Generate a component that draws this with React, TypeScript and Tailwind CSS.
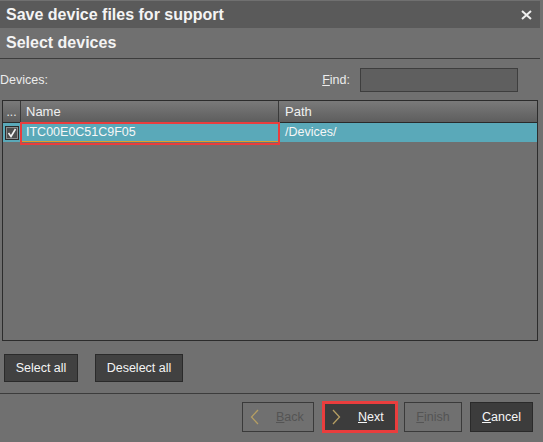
import React from "react";

const Chevron = ({ dir }: { dir: "left" | "right" }) => (
  <svg width="9" height="16" viewBox="0 0 9 16" className="shrink-0">
    <path
      d={dir === "left" ? "M8 1 L1.5 8 L8 15" : "M1 1 L7.5 8 L1 15"}
      fill="none"
      stroke="#b59e63"
      strokeWidth="1.3"
    />
  </svg>
);

export default function App() {
  return (
    <div
      className="w-[543px] h-[442px] bg-[#707070] flex flex-col overflow-hidden relative"
      style={{ fontFamily: '"Liberation Sans", Arial, sans-serif' }}
    >
      {/* Title bar */}
      <div className="pt-[1px] pr-[3px]">
        <div className="h-[27px] bg-[#5a5a5a] flex items-center justify-between pl-[6px] pr-[8px]">
          <span className="text-[16px] font-bold text-[#f4f4f4] leading-none">
            Save device files for support
          </span>
          <svg width="11" height="10" viewBox="0 0 11 10">
            <path d="M1 1 L10 9 M10 1 L1 9" stroke="#f0f0f0" strokeWidth="2" />
          </svg>
        </div>
      </div>
      {/* Sub header */}
      <div className="h-[30px] flex items-center pl-[6px]">
        <span className="text-[16px] font-bold text-[#f4f4f4] leading-none">Select devices</span>
      </div>
      <div className="h-px bg-[#3c3c3c] mr-[3px]" />

      {/* Devices / Find row */}
      <div className="mt-[9px] h-[24px] flex items-center">
        <span className="text-[12.5px] text-[#ececec] ml-0">Devices:</span>
        <span className="ml-auto text-[12.5px] text-[#ececec]">
          <span className="underline">F</span>ind:
        </span>
        <div className="ml-[10px] mr-[25px] w-[158px] h-[24px] bg-[#5f5f5f] border border-[#3e3e3e]" />
      </div>

      {/* Table */}
      <div className="mt-[8px] ml-[2px] w-[536px] h-[241px] border border-[#2c2c2c] relative">
        <div className="h-[22px] flex border-b border-[#2a2a2a] bg-linear-to-b from-[#7a7a7a] to-[#5e5e5e]">
          <div className="w-[18px] border-r border-[#3a3a3a] flex items-center justify-center text-[12px] text-[#e8e8e8]">
            ...
          </div>
          <div className="w-[258px] border-r border-[#3a3a3a] flex items-center pl-[5px] text-[13px] text-[#f0f0f0]">
            Name
          </div>
          <div className="flex-1 flex items-center pl-[6px] text-[13px] text-[#f0f0f0]">Path</div>
        </div>
        <div className="h-[19px] flex bg-[#5aa9b9]">
          <div className="w-[18px] flex items-center pl-[2px]">
            <div className="w-[14px] h-[14px] border border-[#2a2a2a] bg-[#4e4e4e] shadow-[inset_0_0_0_1px_#8c8c8c] flex items-center justify-center">
              <svg width="10" height="10" viewBox="0 0 10 10">
                <path d="M1.5 5 L4 8.5 L8.5 1" fill="none" stroke="#f4f4f4" strokeWidth="1.6" />
              </svg>
            </div>
          </div>
          <div className="w-[258px] flex items-center pl-[5px] text-[12.5px] text-[#f6f6f6] border-b border-r border-[#e0a12a]">
            ITC00E0C51C9F05
          </div>
          <div className="flex-1 flex items-center pl-[6px] text-[12.5px] text-[#f6f6f6]">/Devices/</div>
        </div>
        <div className="absolute left-[17px] top-[21px] w-[260px] h-[23px] border-[2.5px] border-[#ea3d3d]" />
      </div>

      {/* Select/Deselect buttons */}
      <div className="mt-[13px] h-[28px] flex">
        <button className="ml-[4px] w-[74px] h-[28px] bg-[#414141] border border-[#2a2a2a] text-[12.5px] text-[#f4f4f4]">
          Select all
        </button>
        <button className="ml-[17px] w-[88px] h-[28px] bg-[#414141] border border-[#2a2a2a] text-[12.5px] text-[#f4f4f4]">
          Deselect all
        </button>
      </div>

      <div className="mt-[11px] h-px bg-[#3c3c3c] mr-[3px]" />

      {/* Wizard buttons */}
      <div className="mt-[7px] h-[32px] flex items-center justify-end pr-[10px]">
        <div className="w-[72px] h-[30px] border border-[#3a3a3a] flex items-center pl-[7px] text-[12.5px] text-[#545454]">
          <Chevron dir="left" />
          <span className="ml-[17px]">
            <span className="underline">B</span>ack
          </span>
        </div>
        <div className="ml-[8px] w-[76px] h-[32px] border-[3px] border-[#ea3d3d] bg-[#3c3c3c] flex items-center pl-[7px] text-[12.5px] text-[#f6f6f6]">
          <Chevron dir="right" />
          <span className="ml-[17px]">
            <span className="underline">N</span>ext
          </span>
        </div>
        <div className="ml-[6px] w-[58px] h-[30px] border border-[#3a3a3a] flex items-center justify-center text-[12.5px] text-[#545454]">
          <span>
            <span className="underline">F</span>inish
          </span>
        </div>
        <div className="ml-[8px] w-[63px] h-[30px] border border-[#2a2a2a] bg-[#3c3c3c] flex items-center justify-center text-[12.5px] text-[#f6f6f6]">
          <span>
            <span className="underline">C</span>ancel
          </span>
        </div>
      </div>
    </div>
  );
}
